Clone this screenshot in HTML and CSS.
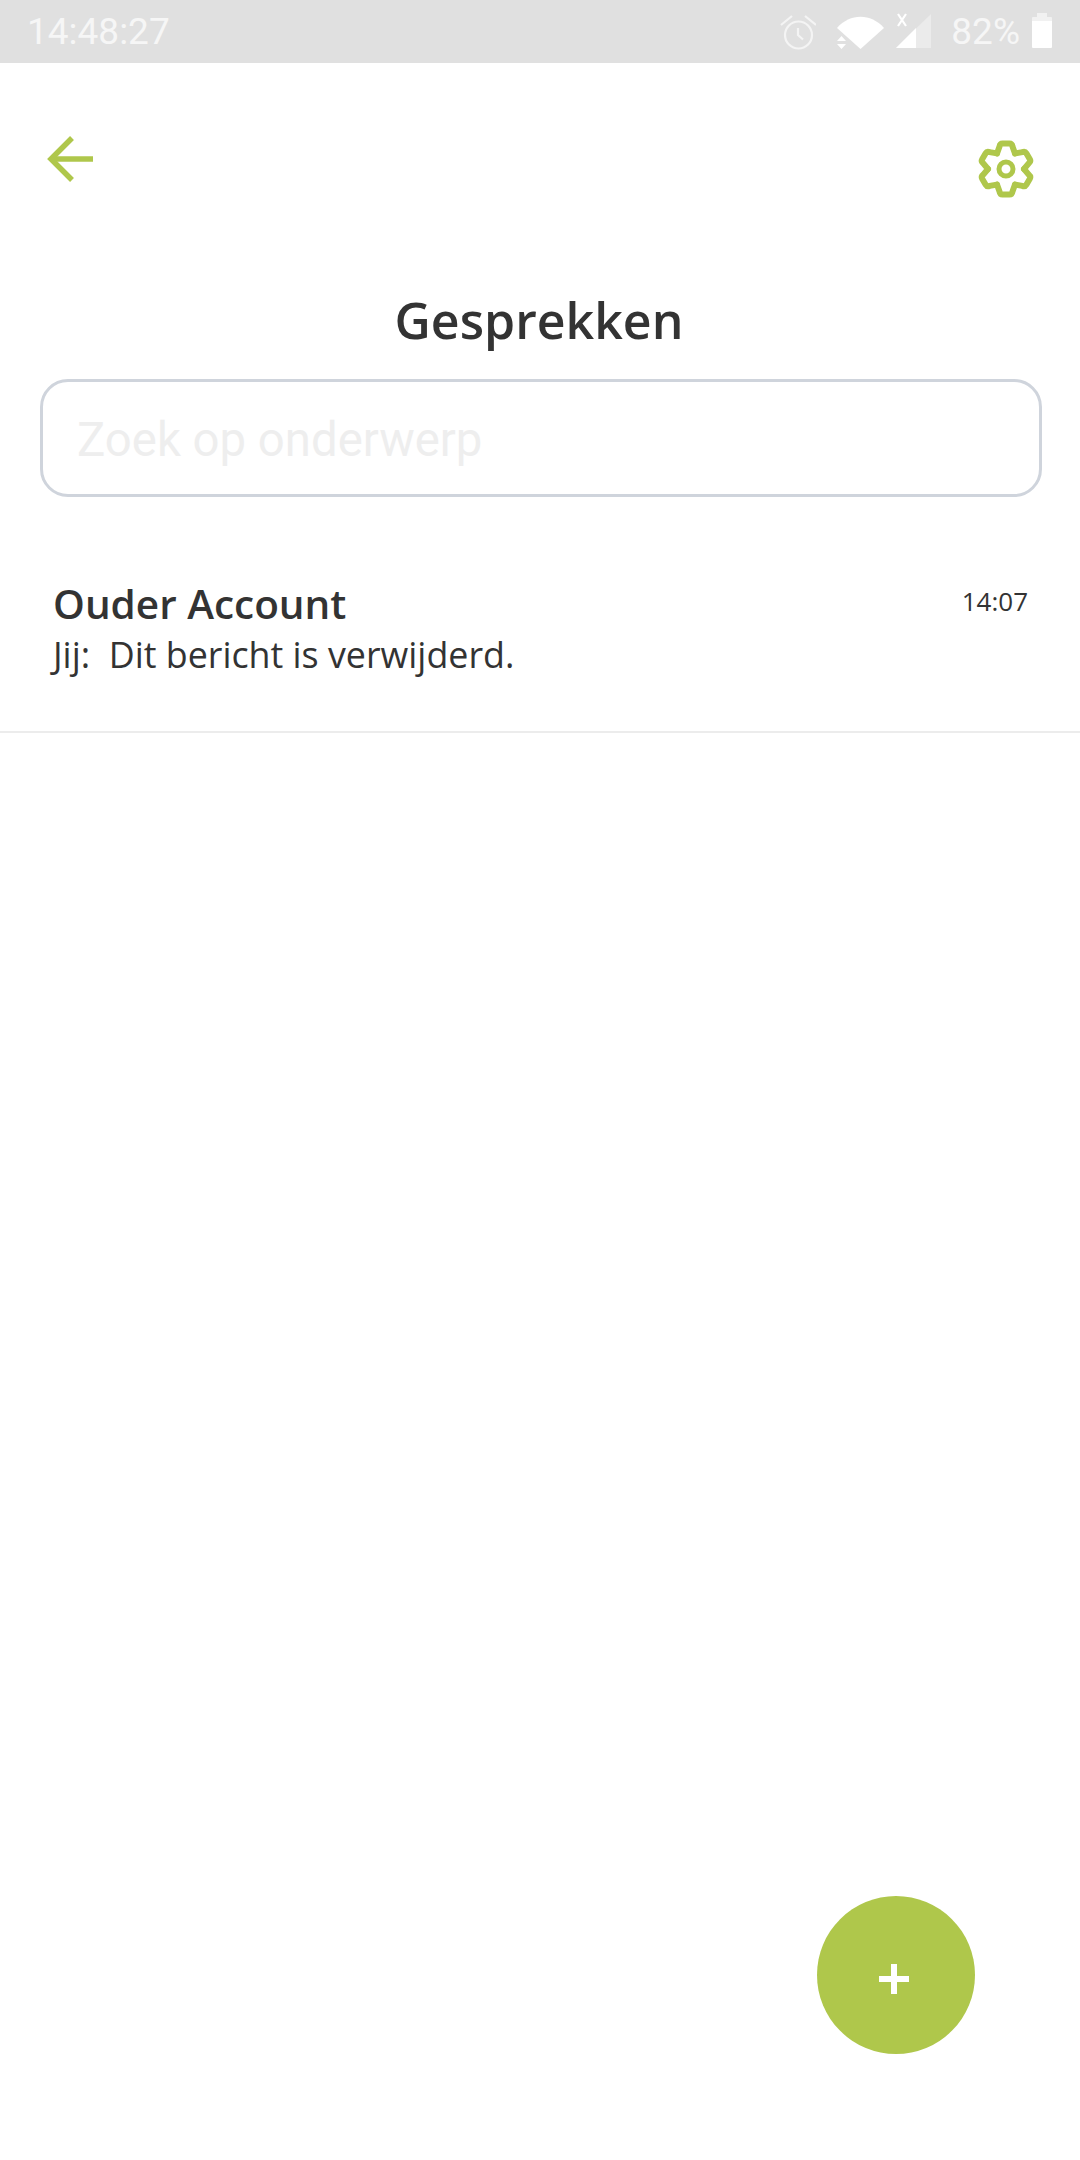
FILE: index.html
```html
<!DOCTYPE html>
<html lang="nl">

<head>
  <meta charset="UTF-8">
  <meta name="viewport" content="width=device-width, initial-scale=1.0">
  <title>Gesprekken</title>
  <link rel="stylesheet" href="styles.css">
</head>

<body>
  <div class="page">

    <!-- Status bar -->
    <div class="status-bar">
      <span class="status-time">14:48:27</span>
      <div class="status-icons">
        <svg class="icon-alarm" width="36" height="37" viewBox="0 0 36 37" fill="none" stroke="#f4f4f4" stroke-width="2.2">
          <circle cx="18.5" cy="22" r="13.5" />
          <path d="M18 15v7l5 4.500" />
          <path d="M1 12 12 3M25 3 36 12" />
        </svg>
        <svg class="icon-wifi" width="47" height="36" viewBox="0 0 47 36" fill="#fff">
          <path d="M0 15C13 0 34 0 47 15L23.500 36Z" />
          <path d="M4.500 23 9 28H0ZM4.500 36 0 31H9Z" />
        </svg>
        <svg class="icon-signal" width="36" height="36" viewBox="0 0 36 36">
          <path d="M35 1V35H0Z" fill="#fff" opacity=".35" />
          <path d="M20 15V35H0Z" fill="#fff" />
          <path d="M2 1 10 13M10 1 2 13" stroke="#fff" stroke-width="2.2" fill="none" />
        </svg>
        <span class="status-battery">82%</span>
        <svg class="icon-battery" width="20" height="36" viewBox="0 0 20 36" fill="#fff">
          <path d="M5 0H15V4H19Q20 4 20 5V8H0V5Q0 4 1 4H5Z" opacity=".55" />
          <path d="M0 8H20V34Q20 35 19 35H1Q0 35 0 34Z" />
        </svg>
      </div>
    </div>

    <!-- Top bar -->
    <div class="top-bar">
      <svg width="48" height="48" viewBox="0 0 48 48" fill="none" stroke="#afc74b" stroke-width="5.5">
        <path d="M47 24H5" />
        <path d="M26 3 5 24 26 45" />
      </svg>
      <svg width="60" height="60" viewBox="-30 -30 60 60" fill="none" stroke="#afc74b" stroke-width="6" stroke-linecap="round">
        <path id="tooth" d="M-9-15.600-6.500-22.500Q-6-25.500-3.500-25.500H3.500Q6-25.500 6.500-22.500L9-15.600" />
        <use href="#tooth" transform="rotate(60)" />
        <use href="#tooth" transform="rotate(120)" />
        <use href="#tooth" transform="rotate(180)" />
        <use href="#tooth" transform="rotate(240)" />
        <use href="#tooth" transform="rotate(300)" />
        <circle r="7" stroke-width="5" />
      </svg>
    </div>

    <h1 class="title">Gesprekken</h1>

    <!-- Search -->
    <div class="search-box">
      <input class="search-input" type="text" placeholder="Zoek op onderwerp">
    </div>

    <!-- Conversations -->
    <div class="conversation">
      <div class="conversation-text">
        <div class="conversation-name">Ouder Account</div>
        <div class="conversation-last">Jij:&nbsp; Dit bericht is verwijderd.</div>
      </div>
      <div class="conversation-time">14:07</div>
    </div>

    <button class="fab">
      <svg width="30" height="30" viewBox="0 0 30 30" fill="#fff">
        <path d="M12 0H18V12H30V18H18V30H12V18H0V12H12Z" />
      </svg>
    </button>
  </div>
</body>

</html>
```
FILE: styles.css
```css
body {
  margin: 0;
  background-color: #fff;
  font-family: "Open Sans", sans-serif;
  color: #333;
}

.page {
  position: relative;
  height: 2160px;
  overflow: hidden;
}

.status-bar {
  display: flex;
  justify-content: space-between;
  align-items: center;
  height: 63px;
  padding: 0 28px 0 27px;
  background-color: #e0e0e0;
  font-family: Roboto, sans-serif;
  font-size: 37px;
  color: #f6f6f6;
}

.status-icons {
  display: flex;
  align-items: center;
}

.icon-alarm {
  margin-top: -1px;
}

.icon-wifi {
  margin-left: 21px;
  margin-top: -1px;
}

.icon-signal {
  margin-left: 12px;
  margin-top: -1px;
}

.status-battery {
  margin-left: 19px;
}

.icon-battery {
  margin-left: 12px;
  margin-top: -1px;
}

.top-bar {
  display: flex;
  justify-content: space-between;
  align-items: flex-start;
  padding: 72px 44px 0 46px;
}

.top-bar svg:last-child {
  margin-top: 4px;
}

.title {
  margin: 88px 0 0;
  padding-right: 2px;
  text-align: center;
  font-size: 50px;
  line-height: 66px;
  font-weight: 600;
  color: #333;
}

.search-box {
  margin: 26px 38px 0 40px;
  height: 118px;
  box-sizing: border-box;
  border: 3px solid #cfd4dc;
  border-radius: 28px;
}

.search-input {
  display: block;
  width: 100%;
  height: 100%;
  box-sizing: border-box;
  padding: 3px 34px 0;
  border: none;
  outline: none;
  background: none;
  font-family: Roboto, sans-serif;
  font-size: 47.300px;
}

.search-input::placeholder {
  color: #eeeeee;
  opacity: 1;
}

.conversation {
  display: flex;
  justify-content: space-between;
  align-items: flex-start;
  height: 236px;
  box-sizing: border-box;
  padding: 82px 52px 0 53px;
  border-bottom: 2px solid #ececec;
}

.conversation-name {
  font-size: 40.500px;
  line-height: 50px;
  font-weight: 600;
}

.conversation-last {
  font-size: 35.800px;
  line-height: 50px;
}

.conversation-time {
  margin-top: 2px;
  font-size: 26px;
  line-height: 40px;
}

.fab {
  position: absolute;
  left: 817px;
  top: 1896px;
  display: flex;
  align-items: center;
  justify-content: center;
  width: 158px;
  height: 158px;
  padding: 7px 4px 0 0;
  border: none;
  border-radius: 50%;
  background-color: #afc74b;
}
```
